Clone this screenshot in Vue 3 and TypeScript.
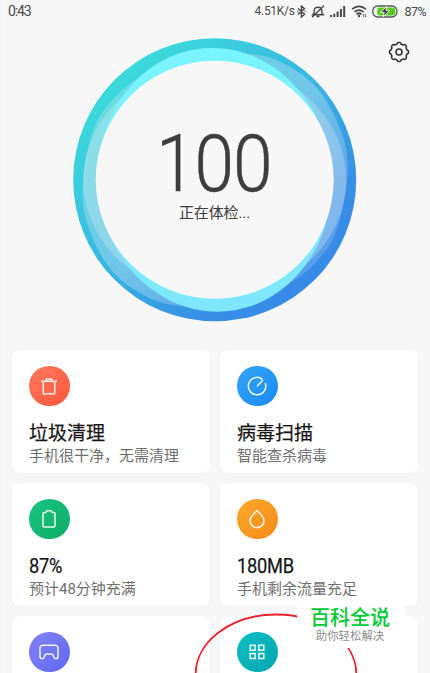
<script setup lang="ts">
interface Card {
  icon: string
  title: string
  note: string
  latin?: boolean
}

const cards: Card[] = [
  { icon: 'trash', title: '垃圾清理', note: '手机很干净，无需清理' },
  { icon: 'scan', title: '病毒扫描', note: '智能查杀病毒' },
  { icon: 'battery', title: '87%', note: '预计48分钟充满', latin: true },
  { icon: 'drop', title: '180MB', note: '手机剩余流量充足', latin: true },
  { icon: 'game', title: '', note: '' },
  { icon: 'grid', title: '', note: '' },
]

// Wavy translucent band: [angle in degrees, radius], repeated half a turn later.
const wave: [number, number][] = [
  [0, 132], [18, 135], [40, 137.3], [58, 135.4], [74, 130.8], [100, 126.5],
  [125, 127], [141, 130], [157, 131.6],
]

function wavePath(): string {
  const pts = [...wave, ...wave.map(([a, r]) => [a + 180, r] as [number, number])].map(([a, r]) => {
    const t = (a * Math.PI) / 180
    return [142 + r * Math.cos(t), 142 - r * Math.sin(t)]
  })
  const n = pts.length
  let d = `M${pts[0][0].toFixed(1)} ${pts[0][1].toFixed(1)}`
  for (let i = 0; i < n; i++) {
    const p0 = pts[(i + n - 1) % n]
    const p1 = pts[i]
    const p2 = pts[(i + 1) % n]
    const p3 = pts[(i + 2) % n]
    const c = [
      p1[0] + (p2[0] - p0[0]) / 6, p1[1] + (p2[1] - p0[1]) / 6,
      p2[0] - (p3[0] - p1[0]) / 6, p2[1] - (p3[1] - p1[1]) / 6,
      p2[0], p2[1],
    ]
    d += 'C' + c.map((v) => v.toFixed(1)).join(' ')
  }
  return d + 'Z'
}

const gearPath = (() => {
  let d = ''
  for (let i = 0; i < 96; i++) {
    const t = (i / 96) * Math.PI * 2
    const r = 8.8 + 0.75 * Math.tanh(2 * Math.cos(8 * t))
    d += `${i ? 'L' : 'M'}${(11 + r * Math.sin(t)).toFixed(2)} ${(11 - r * Math.cos(t)).toFixed(2)}`
  }
  return d + 'Z'
})()
</script>

<template>
  <main class="page">
    <header class="status">
      <span class="time">0:43</span>
      <div class="right">
        <span class="speed">4.51K/s</span>
        <svg class="bt" width="9" height="13" viewBox="0 0 9 13"><path d="M1 3.5l6.5 5.8L4.4 12V1l3.1 2.7L1 9.4M.2 6.5h1M7.6 6.5h1" /></svg>
        <svg class="bell" width="14" height="13" viewBox="0 0 14 13"><path d="M1.700 9.700h10.600L10.800 8V5.200C10.600 3.300 9.200 2.200 7 2.200S3.400 3.300 3.200 5.200V8zM5.500 11.500h3M12.900.700L1.100 12.200" /></svg>
        <svg class="signal" width="16" height="12" viewBox="0 0 16 12"><path d="M0 9h2v2H0zM3.300 7.700h2V11h-2zM6.600 5.500h2V11h-2zM9.900 3h2v8h-2zM13.200 0h2v11h-2z" /></svg>
        <svg class="wifi" width="17" height="13" viewBox="0 0 17 13"><path d="M1 4.200Q8 -1.500 15 4.200M3.400 6.900Q8 3.200 12.600 6.900M5.500 9.300Q8 7.200 10.500 9.300" /><circle cx="8" cy="11" r="1.200" /><path class="thin" d="M12.600 9v3M12 10l.600-1M14.500 9v3M15.100 11l-.600 1" /></svg>
        <svg class="power" width="26" height="13" viewBox="0 0 26 13">
          <rect x=".700" y="1" width="24.300" height="11" rx="5.200" fill="#fff" stroke="#555" stroke-width="1.300" />
          <path d="M6 2.600h14.500q2.800 0 2.800 3.900t-2.800 3.900H6q-.800-1-.800-3.900T6 2.600z" fill="#53cb1b" />
          <path d="M14.700 1.500L8.300 7.300h3.900l-1.200 4.400 7-6.300h-3.900z" fill="#3c3c3c" stroke="#fff" stroke-width=".900" />
        </svg>
        <span class="percent">87%</span>
      </div>
    </header>

    <section class="hero">
      <svg class="ring" width="284" height="284" viewBox="0 0 284 284">
        <defs>
          <linearGradient id="rim" x1=".18" y1=".15" x2=".82" y2=".85">
            <stop offset="0" stop-color="#3bd8dc" />
            <stop offset=".5" stop-color="#38b3e1" />
            <stop offset=".85" stop-color="#368fe6" />
            <stop offset="1" stop-color="#378be7" />
          </linearGradient>
          <linearGradient id="glow" x1="0" y1="0" x2="0" y2="1">
            <stop offset="0" stop-color="#79f5ff" />
            <stop offset="1" stop-color="#7fe7ff" />
          </linearGradient>
          <linearGradient id="veil" x1="0" y1="0" x2="1" y2="1">
            <stop offset=".15" stop-color="#e2f0f6" stop-opacity=".25" />
            <stop offset=".5" stop-color="#dceaf6" stop-opacity=".34" />
            <stop offset=".85" stop-color="#dceaf6" stop-opacity=".2" />
          </linearGradient>
        </defs>
        <circle cx="141.700" cy="141.800" r="141.500" fill="url(#rim)" />
        <path :d="wavePath()" fill="url(#veil)" />
        <ellipse cx="141.700" cy="142" rx="131.500" ry="117" fill="#ebf0f4" fill-opacity=".27" />
        <ellipse cx="141.700" cy="141.800" rx="117" ry="132" transform="rotate(-5 142 142)" fill="url(#glow)" />
        <circle cx="141.700" cy="141.800" r="119" fill="#f7f7f7" />
      </svg>
      <div class="score">
        <strong>100</strong>
        <span>正在体检...</span>
      </div>
      <svg class="gear" width="22" height="22" viewBox="0 0 22 22">
        <path :d="gearPath" /><circle cx="11" cy="11" r="3" />
      </svg>
    </section>

    <section class="cards">
      <article v-for="card in cards" :key="card.icon" class="card">
        <div class="badge" :class="card.icon">
          <svg width="24" height="24" viewBox="0 0 24 24">
            <path v-if="card.icon === 'trash'" d="M4 7.300h16M6.300 7.500v12.200h11.400V7.500M9.500 7V5h5v2" />
            <path v-else-if="card.icon === 'scan'" d="M17.500 5.300A8.700 8.700 0 1 0 20.200 9M12 12.200L18 6" />
            <path v-else-if="card.icon === 'battery'" d="M7.200 5.500h1.600L10 3.700h4l1.200 1.800h1.600q1.200 0 1.200 1.200v12q0 1.200-1.200 1.200H7.200Q6 19.900 6 18.700v-12q0-1.200 1.200-1.200z" />
            <path v-else-if="card.icon === 'drop'" d="M12 3.700C14.500 6.200 19 9.500 19 13.700a7 7 0 0 1-14 0C5 9.500 9.500 6.200 12 3.700z" />
            <path v-else-if="card.icon === 'game'" d="M6.200 5.200h11.600Q21 5.200 21 8.200v8.300q0 2.200-2.100 2.200-1.600 0-2-1.500-.700-3.200-2.600-3.200H9.700q-1.900 0-2.600 3.200-.400 1.500-2 1.500Q3 18.700 3 16.500V8.200q0-3 3.200-3z" />
            <path v-else d="M5.200 5.200h5v5h-5zM13.800 5.200h5v5h-5zM5.200 13.600h5v5h-5zM13.800 13.600h5v5h-5z" />
          </svg>
        </div>
        <h2 :class="{ latin: card.latin }">{{ card.title }}</h2>
        <p>{{ card.note }}</p>
      </article>
    </section>

    <svg class="mark" width="164" height="62" viewBox="0 0 164 62"><ellipse cx="82" cy="61" rx="80.300" ry="59.500" /></svg>
    <aside class="stamp">
      <b>百科全说</b>
      <span>助你轻松解决</span>
    </aside>
  </main>
</template>

<style>
body {
  background: #f7f7f7;
  overflow: hidden;
}
</style>

<style scoped>
.page {
  position: relative;
  box-sizing: border-box;
  width: 430px;
  height: 673px;
  overflow: hidden;
  background: #f7f7f7;
  border-left: 1px solid #eef3fb;
  border-right: 1px solid #eef3fb;
  font-family: Roboto, "Noto Sans CJK SC", sans-serif;
  color: #3d3d3d;
}
.status {
  display: flex;
  justify-content: space-between;
  align-items: center;
  height: 23px;
  padding: 0 3px 0 7px;
  font-size: 12px;
  line-height: 23px;
  color: #484848;
}
.time { font-size: 14px; letter-spacing: -1.1px; }
.right { display: flex; align-items: center; }
.speed { letter-spacing: -0.3px; }
.percent { margin-left: 7px; letter-spacing: -0.6px; font-size: 12.500px; }
.bt { margin-left: 2px; }
.bell { margin-left: 5px; }
.signal { margin-left: 5px; }
.wifi { margin-left: 5px; }
.power { margin-left: 4px; }
.bt path, .bell path, .wifi path {
  fill: none;
  stroke: #484848;
  stroke-width: 1.4;
}
.wifi path { stroke-width: 1.700; }
.wifi .thin { stroke-width: 0.7; }
.wifi circle, .signal path { fill: #484848; }
.hero {
  position: relative;
  display: flex;
  justify-content: center;
  height: 327px;
  padding-top: 15px;
  box-sizing: border-box;
}
.ring { display: block; }
.score {
  position: absolute;
  top: 103px;
  left: 0;
  width: 100%;
  display: flex;
  flex-direction: column;
  align-items: center;
}
.score strong {
  height: 76px;
  font-family: Roboto, sans-serif;
  font-weight: 300;
  font-size: 79px;
  line-height: 76px;
  letter-spacing: -1px;
  transform: translateX(-1.5px) scaleX(0.9);
  -webkit-text-stroke: 0.5px #3d3d3d;
}
.score span {
  font-size: 15px;
  line-height: 22px;
  letter-spacing: -0.1px;
  transform: translateX(-0.5px);
}
.gear {
  position: absolute;
  left: 387px;
  top: 18px;
}
.gear path, .gear circle {
  fill: none;
  stroke: #333;
  stroke-width: 1.6;
  stroke-linejoin: round;
}
.cards {
  display: grid;
  grid-template-columns: 198px 198px;
  grid-auto-rows: 123px;
  gap: 10px;
  padding-left: 11px;
}
.card {
  box-sizing: border-box;
  padding: 15.500px 17px 0;
  border-radius: 8px;
  background: #fff;
  box-shadow: 0 1px 5px rgba(0, 0, 0, 0.025);
}
.badge {
  display: flex;
  align-items: center;
  justify-content: center;
  width: 40.500px;
  height: 40.500px;
  border-radius: 50%;
}
.badge path {
  fill: none;
  stroke: #fff;
  stroke-opacity: 0.9;
  stroke-width: 1.5;
}
.trash { background: linear-gradient(135deg, #ff7961, #ff5738); }
.scan { background: linear-gradient(135deg, #33a5f5, #1a8af8); }
.battery { background: linear-gradient(135deg, #1bc485, #0dac63); }
.drop { background: linear-gradient(135deg, #f9aa2b, #f98a18); }
.game { background: linear-gradient(135deg, #8184f7, #6068f2); }
.grid { background: linear-gradient(135deg, #0dc0c3, #03a5b0); }
.card h2 {
  margin: 15.500px 0 0;
  height: 23px;
  font-size: 19px;
  line-height: 24px;
  font-weight: 400;
  color: #161616;
  -webkit-text-stroke: 0.25px #161616;
  white-space: nowrap;
}
.card h2.latin {
  font-size: 21px;
  line-height: 22px;
  letter-spacing: -0.3px;
  transform: scaleX(0.87);
  transform-origin: left center;
}
.card p {
  margin: 0;
  font-size: 15px;
  line-height: 22px;
  color: #707070;
  white-space: nowrap;
}
.mark {
  position: absolute;
  left: 193px;
  top: 613px;
}
.mark ellipse {
  fill: none;
  stroke: #e9202b;
  stroke-width: 1.800;
}
.stamp {
  position: absolute;
  left: 296px;
  top: 605px;
  width: 106px;
  padding-right: 2px;
  height: 43px;
  display: flex;
  flex-direction: column;
  align-items: center;
  background: #fff;
  white-space: nowrap;
}
.stamp b {
  margin-top: 1px;
  font-size: 20px;
  line-height: 24px;
  font-weight: 500;
  color: #00cb35;
}
.stamp span {
  font-size: 11.400px;
  line-height: 13px;
  color: #8e8e8e;
}
</style>
